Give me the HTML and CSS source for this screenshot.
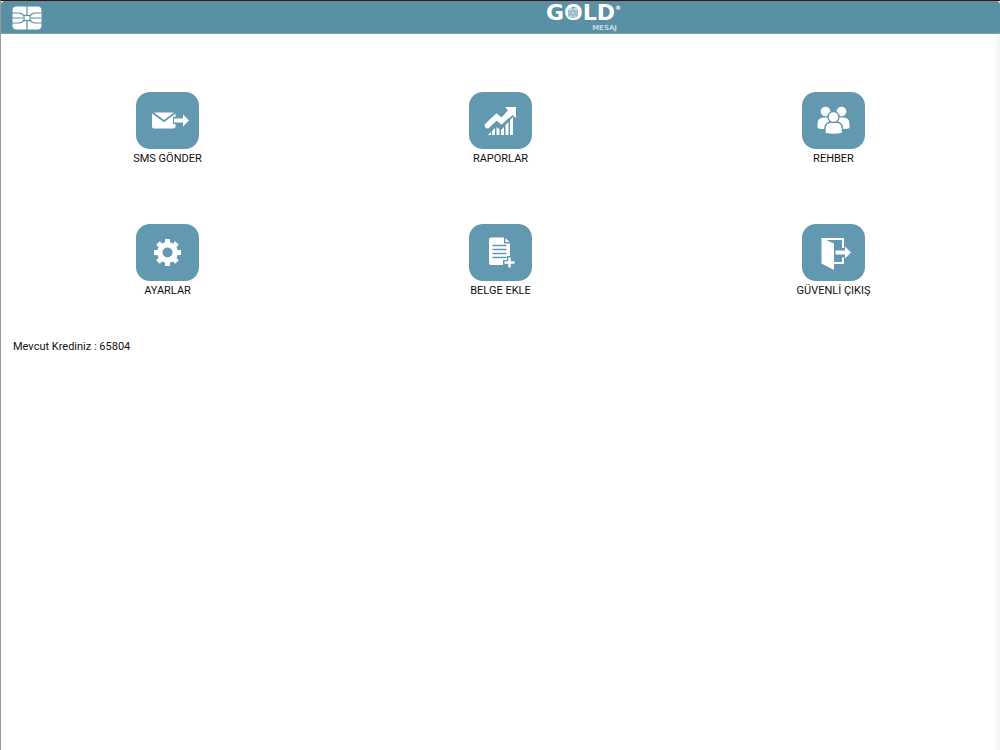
FILE: index.html
```html
<!DOCTYPE html>
<html lang="tr">
<head>
    <meta charset="UTF-8">
    <meta name="viewport" content="width=device-width, initial-scale=1.0">
    <title>Gold Mesaj</title>
    <link rel="stylesheet" href="styles.css">
</head>
<body>
    <header class="header">
        <button class="menu-button" type="button" aria-label="Menü">
            <svg width="30" height="24" viewBox="0 0 30 24">
                <rect x="0.5" y="0.5" width="29" height="23" rx="4" fill="#fff"/>
                <g fill="none" stroke="#5890a6" stroke-width="1.2">
                    <path d="M0 7h7q3 0 5 3M0 12h8l3 0M0 17h7q3 0 5-3"/>
                    <path d="M30 7h-7q-3 0-5 3M30 12H19M30 17h-7q-3 0-5-3"/>
                    <path d="M15 0v9M15 15v9"/>
                    <rect x="12" y="9.5" width="6" height="5"/>
                </g>
            </svg>
        </button>
        <div class="brand">
            <div class="brand-name">GOLD<sup>®</sup>
                <svg class="brand-chip" width="10" height="10" viewBox="0 0 10 10">
                    <rect width="10" height="10" rx="2" fill="#c5dae2"/>
                    <path d="M0 3h3l1 1M0 7h3l1-1M10 3H7L6 4M10 7H7L6 6M5 0v4M5 6v4M0 5h4M6 5h4" fill="none" stroke="#5890a6" stroke-width="0.7"/>
                </svg>
            </div>
            <div class="brand-sub">MESAJ</div>
        </div>
    </header>

    <main class="container">
        <nav class="menu">
            <a class="menu-item" href="#sms">
                <span class="menu-icon">
                    <svg width="63" height="57" viewBox="0 0 63 57">
                        <path d="M18 20.5h20L28 28z" fill="#fff"/>
                        <path d="M16 21.5l12 8.7L39.5 21.5V25H37v7h2.5v2.5q0 2-2 2H18q-2 0-2-2z" fill="#fff"/>
                        <path d="M38 26.5h9V22.5l6 6-6 6v-4h-9z" fill="#fff"/>
                    </svg>
                </span>
                SMS GÖNDER
            </a>
            <a class="menu-item" href="#raporlar">
                <span class="menu-icon">
                    <svg width="63" height="57" viewBox="0 0 63 57">
                        <path d="M18.5 33.5l9-8.5 5 4 9-8.5" fill="none" stroke="#fff" stroke-width="5.5" stroke-linecap="round"/>
                        <path d="M36 15h11v11l-3.500-3-3 3-4.500-4.500 3-3z" fill="#fff"/>
                        <path d="M19 43l3-3v3zM23 39l3-3v7h-3zM27.5 35l3 2.5V43h-3zM32 38l3-3v8h-3zM36.5 33l3-3v13h-3zM41 28l3-3v18h-3z" fill="#fff"/>
                    </svg>
                </span>
                RAPORLAR
            </a>
            <a class="menu-item" href="#rehber">
                <span class="menu-icon">
                    <svg width="63" height="57" viewBox="0 0 63 57">
                        <g fill="#fff">
                            <circle cx="23.5" cy="19.5" r="4.8"/>
                            <circle cx="39.5" cy="19.5" r="4.8"/>
                            <path d="M15.5 36v-4q0-6.5 6-6.5h4q3 0 4.5 3l-5 4-1 4q-5 1-8.5-.5z"/>
                            <path d="M47.5 36v-4q0-6.5-6-6.5h-4q-3 0-4.5 3l5 4 1 4q5 1 8.5-.5z"/>
                        </g>
                        <g fill="#fff" stroke="#6299b0" stroke-width="1.4">
                            <path d="M23 41.5v-4.5q0-7 7-7h3.500q7 0 7 7v4.500q-9 2-17.500 0z"/>
                            <circle cx="31.5" cy="25" r="5.5"/>
                        </g>
                    </svg>
                </span>
                REHBER
            </a>
            <a class="menu-item" href="#ayarlar">
                <span class="menu-icon">
                    <svg width="63" height="57" viewBox="0 0 63 57">
                        <circle cx="31.5" cy="28.5" r="7.75" fill="none" stroke="#fff" stroke-width="5.5"/>
                        <g stroke="#fff" stroke-width="5">
                            <path d="M31.5 15v5M31.5 37v5M18 28.5h5M40 28.5h5"/>
                            <path d="M22 19l4 4M37 34l4 4M22 38l4-4M37 23l4-4"/>
                        </g>
                    </svg>
                </span>
                AYARLAR
            </a>
            <a class="menu-item" href="#belge">
                <span class="menu-icon">
                    <svg width="63" height="57" viewBox="0 0 63 57">
                        <path d="M22 13.5h13v6h6V36h-3v5H22q-2 0-2-2V15.5q0-2 2-2z" fill="#fff"/>
                        <path d="M36.5 14l4 4h-4z" fill="#fff"/>
                        <path d="M23.5 21.5h14M23.5 25.5h14M23.5 29.5h14M23.5 33.5h14" stroke="#6299b0" stroke-width="1.5"/>
                        <path d="M40.5 32v13M34 38.5h13" stroke="#6299b0" stroke-width="5"/>
                        <path d="M40.5 33.5v10M35.5 38.5h10" stroke="#fff" stroke-width="2.5"/>
                    </svg>
                </span>
                BELGE EKLE
            </a>
            <a class="menu-item" href="#cikis">
                <span class="menu-icon">
                    <svg width="63" height="57" viewBox="0 0 63 57">
                        <path d="M20 15h21v9M41 33.5v5.5H31" fill="none" stroke="#fff" stroke-width="2"/>
                        <path d="M19.5 14l12.5 5.5V46l-12.5-6.5z" fill="#fff"/>
                        <path d="M33.5 26.5h9.5V22.5l6 6-6 6V30.5h-9.5z" fill="#fff"/>
                    </svg>
                </span>
                GÜVENLİ ÇIKIŞ
            </a>
        </nav>

        <p class="credit">Mevcut Krediniz : 65804</p>
    </main>
</body>
</html>
```
FILE: styles.css
```css
html, body {
    margin: 0;
    padding: 0;
}

body {
    min-height: 100vh;
    box-sizing: border-box;
    border-top: 1px solid #231f20;
    border-left: 1px solid #999;
    background: linear-gradient(to left, #f4f4f4, #fff 6px);
    font-family: Roboto, "Liberation Sans", sans-serif;
    font-size: 11px;
    color: #111;
}

.header {
    display: grid;
    grid-template-columns: 6fr 5fr;
    height: 33px;
    box-sizing: border-box;
    border-top: 1px solid #77858b;
    border-bottom: 1px solid #79a6b7;
    border-radius: 4px 4px 0 0;
    background-color: #5890a6;
}

.menu-button {
    justify-self: start;
    margin: 0;
    padding: 4px 11px;
    border: none;
    background: none;
    cursor: pointer;
}

.menu-button svg {
    display: block;
}

.brand {
    justify-self: start;
    position: relative;
    color: #fff;
    font-family: "DejaVu Sans", sans-serif;
}

.brand-name {
    font-size: 22px;
    line-height: 22px;
    font-weight: bold;
    white-space: nowrap;
}

.brand-name sup {
    font-size: 6px;
    line-height: 12px;
    vertical-align: top;
}

.brand-chip {
    position: absolute;
    left: 22px;
    top: 6px;
}

.brand-sub {
    padding-right: 4px;
    font-size: 7px;
    line-height: 8px;
    font-weight: bold;
    text-align: right;
    color: #c5dae2;
}

.container {
    padding: 58px 0 0;
}

.menu {
    display: grid;
    grid-template-columns: repeat(3, 1fr);
    row-gap: 55px;
}

.menu-item {
    display: flex;
    flex-direction: column;
    align-items: center;
    line-height: 20px;
    color: #111;
    text-decoration: none;
}

.menu-icon {
    width: 63px;
    height: 57px;
    border-radius: 14px;
    background-color: #6299b0;
}

.menu-icon svg {
    display: block;
}

.credit {
    margin: 36px 12px 0;
    line-height: 20px;
}
```
